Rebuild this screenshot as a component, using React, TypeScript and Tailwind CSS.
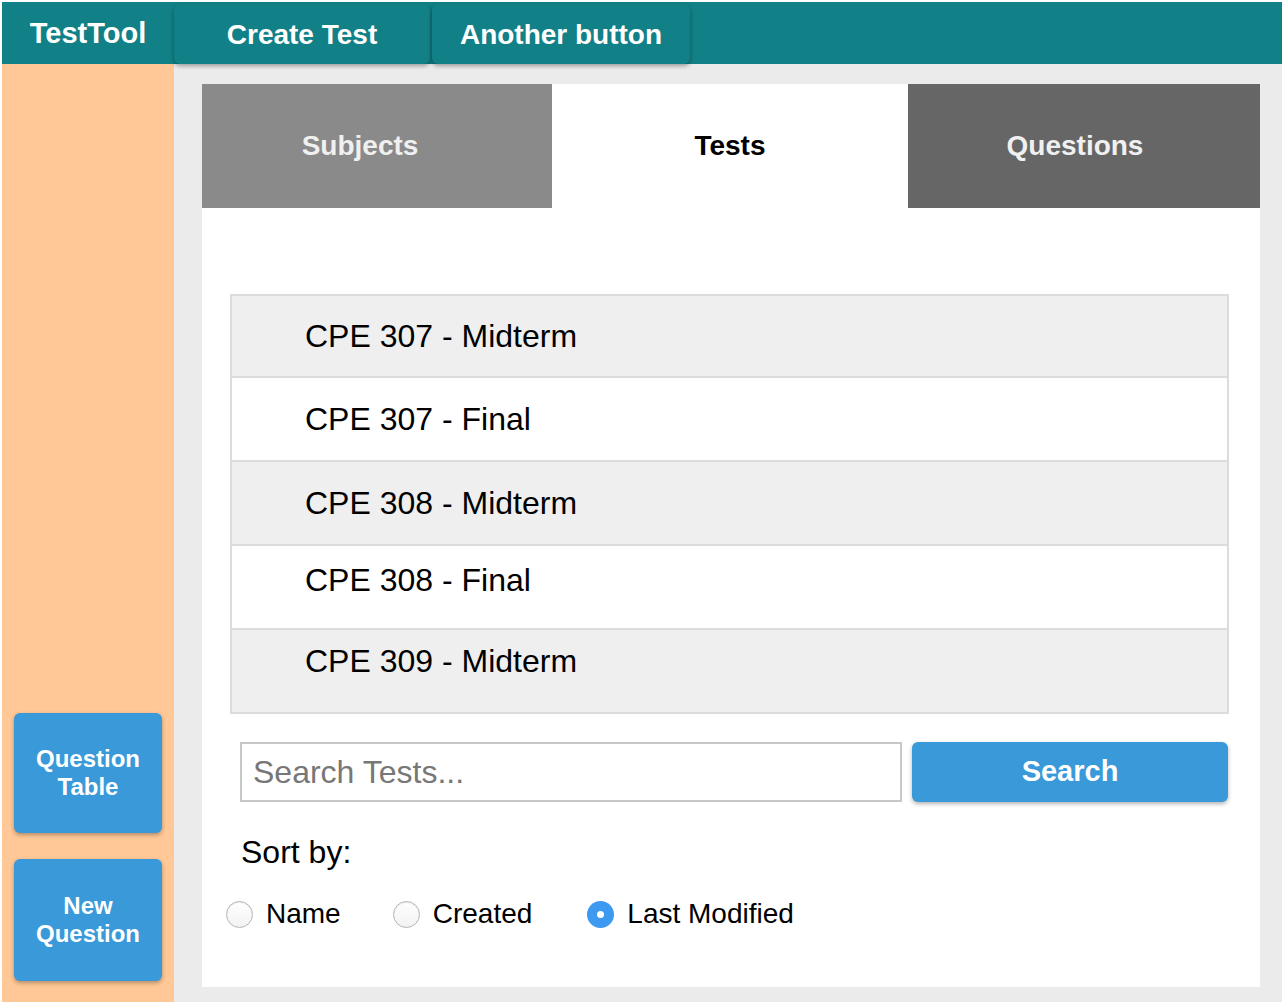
import React from 'react';

const tests = [
  { name: 'CPE 307 - Midterm', pad: '' },
  { name: 'CPE 307 - Final', pad: '' },
  { name: 'CPE 308 - Midterm', pad: '' },
  { name: 'CPE 308 - Final', pad: 'pb-[14px]' },
  { name: 'CPE 309 - Midterm', pad: 'pb-[20px]' },
];

const Radio: React.FC<{ label: string; checked?: boolean; className?: string }> = ({ label, checked, className }) => (
  <label className={`flex items-center gap-[13px] ${className ?? ''}`}>
    {checked ? (
      <span className="w-[27px] h-[27px] rounded-full bg-[#3d9af0] flex items-center justify-center">
        <span className="w-[7px] h-[7px] rounded-full bg-white" />
      </span>
    ) : (
      <span className="w-[27px] h-[27px] rounded-full border border-[#b5b5b5] bg-gradient-to-b from-white to-[#f2f2f2] shadow-[inset_0_1px_1px_rgba(0,0,0,0.08)]" />
    )}
    <span className="text-[28px] leading-[40px] text-black">{label}</span>
  </label>
);

export default function App() {
  return (
    <div className="w-[1284px] h-[1004px] p-[2px] bg-white flex flex-col font-['Liberation_Sans',Arial,sans-serif]">
      {/* top bar */}
      <header className="h-[62px] bg-[#128087] flex items-stretch relative z-10">
        <div className="w-[172px] flex items-center justify-center pt-[2px] text-white font-bold text-[29px]">
          TestTool
        </div>
        <button className="w-[256px] mt-[2px] pt-[2px] rounded-md bg-[#128087] text-white font-bold text-[28px] shadow-[0_2px_4px_rgba(0,0,0,0.35)]">
          Create Test
        </button>
        <button className="w-[258px] ml-[2px] mt-[2px] pt-[2px] rounded-md bg-[#128087] text-white font-bold text-[28px] shadow-[0_2px_4px_rgba(0,0,0,0.35)]">
          Another button
        </button>
      </header>

      <div className="flex flex-1 min-h-0">
        {/* sidebar */}
        <aside className="w-[172px] bg-[#ffc896] flex flex-col justify-end items-center px-[12px] pb-[21px] gap-[26px]">
          <button className="w-[148px] h-[120px] rounded-md bg-[#3a99d9] text-white font-bold text-[24px] leading-[28px] shadow-[0_2px_4px_rgba(0,0,0,0.3)]">
            Question
            <br />
            Table
          </button>
          <button className="w-[148px] h-[122px] rounded-md bg-[#3a99d9] text-white font-bold text-[24px] leading-[28px] shadow-[0_2px_4px_rgba(0,0,0,0.3)]">
            New
            <br />
            Question
          </button>
        </aside>

        {/* main */}
        <main className="flex-1 bg-[#ebebeb] pl-[28px] pr-[22px] pt-[20px] pb-[15px]">
          <div className="bg-white h-full flex flex-col">
            <div className="flex h-[124px]">
              <div className="w-[350px] bg-[#8a8a8a] flex items-center justify-center pr-[34px] text-[#f0f0f0] font-bold text-[28px]">
                Subjects
              </div>
              <div className="w-[356px] bg-white flex items-center justify-center text-black font-bold text-[28px]">
                Tests
              </div>
              <div className="flex-1 bg-[#666666] flex items-center justify-center pr-[18px] text-[#f0f0f0] font-bold text-[28px]">
                Questions
              </div>
            </div>

            <div className="mt-[86px] ml-[28px] mr-[31px] border-2 border-[#dcdcdc] flex flex-col">
              {tests.map((t, i) => (
                <div
                  key={t.name}
                  className={`flex items-center pl-[73px] text-[32px] text-black ${t.pad} ${
                    i % 2 === 0 ? 'bg-[#efefef]' : 'bg-white'
                  } ${i > 0 ? 'h-[84px] border-t-2 border-[#dcdcdc]' : 'h-[80px]'}`}
                >
                  {t.name}
                </div>
              ))}
            </div>

            <div className="flex mt-[28px] ml-[38px] mr-[32px] gap-[10px] h-[60px]">
              <input
                type="text"
                placeholder="Search Tests..."
                className="w-[662px] h-full border-2 border-[#c8c8c8] px-[11px] text-[32px] text-black placeholder:text-[#777777] outline-none"
              />
              <button className="flex-1 h-full rounded-md bg-[#3a99d9] text-white font-bold text-[29px] shadow-[0_2px_4px_rgba(0,0,0,0.3)]">
                Search
              </button>
            </div>

            <div className="ml-[39px] mt-[30px] text-[32px] leading-[40px] text-black">Sort by:</div>

            <div className="flex items-center h-[40px] ml-[24px] mt-[22px]">
              <Radio label="Name" />
              <Radio label="Created" className="ml-[52px]" />
              <Radio label="Last Modified" checked className="ml-[55px]" />
            </div>
          </div>
        </main>
      </div>
    </div>
  );
}
